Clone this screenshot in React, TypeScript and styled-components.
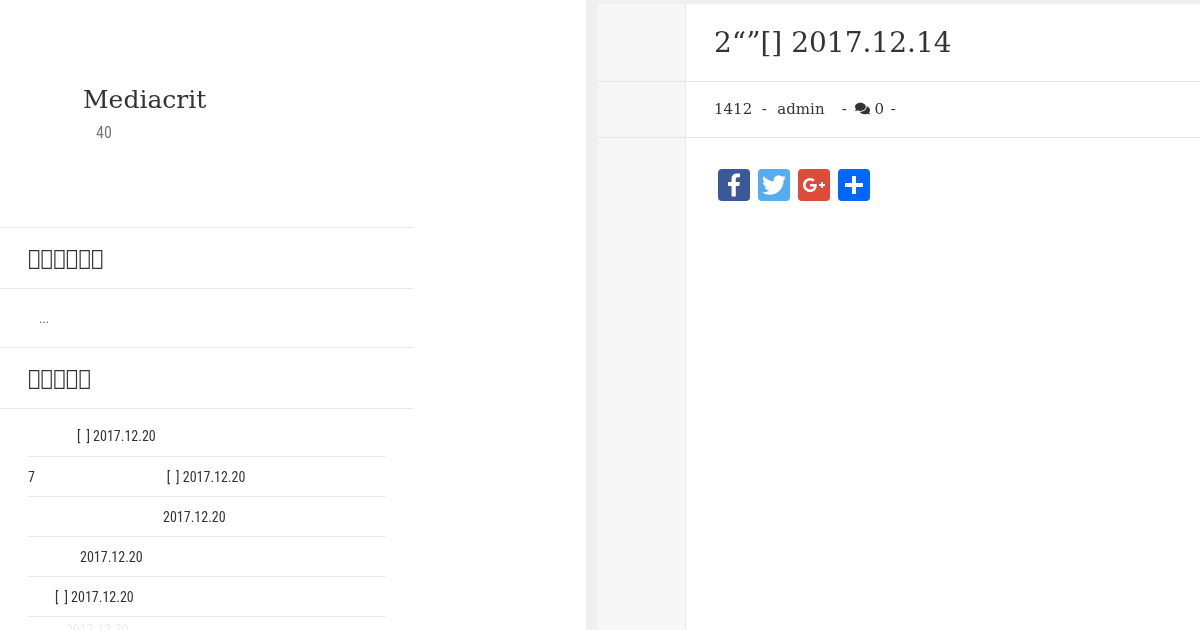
import React from "react";
import styled, { createGlobalStyle } from "styled-components";
import { FaComments } from "react-icons/fa";

const Global = createGlobalStyle`
  html, body { margin: 0; padding: 0; background: #fff; height: 630px; overflow: hidden; }
  #root { height: 630px; will-change: transform; }
`;
const serif = `"DejaVu Serif", serif`;
const narrow = `"Roboto Condensed", Roboto, "Liberation Sans", sans-serif`;

const Page = styled.div`
  display: flex;
  height: 630px;
  overflow: hidden;
`;
const Sidebar = styled.aside`
  width: 413px;
  flex: none;
`;
const Gutter = styled.div`
  width: 173px;
  flex: none;
`;
const Strip = styled.div`
  width: 12px;
  flex: none;
  background: #f0f0f0;
`;
const Main = styled.main`
  flex: 1;
  display: flex;
  flex-direction: column;
  padding-top: 4px;
  background: #f0f0f0;
  min-width: 0;
`;
const Brand = styled.div`
  height: 227px;
  padding: 85px 0 0 83px;
  box-sizing: border-box;
`;
const SiteName = styled.div`
  font: 25px/30px ${serif};
  color: #333;
`;
const Tagline = styled.div`
  font: 16px/20px ${narrow};
  font-stretch: 75%;
  color: #777;
  margin: 8px 0 0 13px;
`;
const WidgetTitle = styled.h3`
  margin: 0;
  height: 62px;
  box-sizing: border-box;
  padding-left: 28px;
  border-top: 1px solid #e8e8e8;
  border-bottom: 1px solid #e8e8e8;
  font: 400 21px/60px ${serif};
  color: #333;
`;
const Excerpt = styled.div`
  height: 58px;
  padding: 0 0 0 39px;
  font: 13px/60px ${narrow};
  font-stretch: 75%;
  color: #666;
`;
const PostList = styled.ul`
  list-style: none;
  margin: 8px 0 0;
  padding: 0 28px;
`;
const PostItem = styled.li<{ $indent: number; $faded?: boolean }>`
  height: 39px;
  padding-left: ${(p) => p.$indent}px;
  border-bottom: 1px solid #e8e8e8;
  font: 14px/${(p) => (p.$faded ? 26 : 41)}px ${narrow};
  font-stretch: 75%;
  color: ${(p) => (p.$faded ? "#eee" : "#333")};
  white-space: pre;
  &:first-child { line-height: 39px; }
`;
const Row = styled.div<{ $h: number }>`
  display: flex;
  flex: none;
  height: ${(p) => p.$h}px;
  border-bottom: 1px solid #e8e8e8;
  box-sizing: border-box;
  background: #fff;
`;
const Side = styled.div`
  width: 87px;
  flex: none;
  background: #f7f7f7;
  border-right: 1px solid #e8e8e8;
`;
const Cell = styled.div`
  flex: 1;
  padding-left: 28px;
  display: flex;
  align-items: center;
  min-width: 0;
`;
const Title = styled.h1`
  margin: 0;
  font: 400 28px/1 ${serif};
  color: #333;
  white-space: nowrap;
`;
const Meta = styled.div`
  display: flex;
  align-items: center;
  font: 15px/20px ${serif};
  color: #333;
  white-space: pre;
  margin-bottom: 2px;
  svg { width: 15px; height: 15px; color: #333; margin-left: 3px; }
`;
const MetaPart = styled.span<{ $left?: number; $right?: number }>`
  margin-left: ${(p) => p.$left ?? 0}px;
  margin-right: ${(p) => p.$right ?? 0}px;
`;
const Body = styled.div`
  flex: 1;
  display: flex;
  background: #fff;
`;
const Shares = styled.div`
  flex: 1;
  display: flex;
  gap: 8px;
  padding: 31px 0 0 32px;
  align-items: flex-start;
`;
const ShareIcon = styled.svg<{ $bg: string }>`
  width: 32px;
  height: 32px;
  border-radius: 4px;
  background: ${(p) => p.$bg};
  display: block;
  fill: #fff;
`;

const posts: [string, number, boolean?][] = [
  ["[\u2009 ] 2017.12.20", 49],
  ["7" + " ".repeat(41) + "[\u2009 ] 2017.12.20", 0],
  ["2017.12.20", 135],
  ["2017.12.20", 52],
  ["[\u2009 ] 2017.12.20", 27],
  ["2017.12.20", 38, true],
];

export default function App() {
  return (
    <Page>
      <Global />
      <Sidebar>
        <Brand>
          <SiteName>Mediacrit</SiteName>
          <Tagline>40</Tagline>
        </Brand>
        <WidgetTitle>{"\uE100\uE101\uE102\uE103\uE104\uE105"}</WidgetTitle>
        <Excerpt>...</Excerpt>
        <WidgetTitle>{"\uE100\uE101\uE102\uE103\uE104"}</WidgetTitle>
        <PostList>
          {posts.map(([t, i, f], n) => (
            <PostItem key={n} $indent={i} $faded={f}>{t}</PostItem>
          ))}
        </PostList>
      </Sidebar>
      <Gutter />
      <Strip />
      <Main>
        <Row $h={78}>
          <Side />
          <Cell><Title>2“”[] 2017.12.14</Title></Cell>
        </Row>
        <Row $h={56}>
          <Side />
          <Cell>
            <Meta>1412  -  <MetaPart $left={1} $right={3}>admin</MetaPart>   - <FaComments /> 0 <MetaPart $left={2}>-</MetaPart></Meta>
          </Cell>
        </Row>
        <Body>
          <Side />
          <Shares>
            <ShareIcon $bg="#3B5998" viewBox="0 0 32 32"><path d="M17.78 27.5V17.008h3.522l.527-4.09h-4.05v-2.61c0-1.182.33-1.99 2.023-1.99h2.166V4.66c-.375-.05-1.66-.16-3.155-.16-3.123 0-5.26 1.905-5.26 5.405v3.016h-3.53v4.09h3.53V27.5h4.223z" /></ShareIcon>
            <ShareIcon $bg="#55ACEE" viewBox="0 0 32 32"><path d="M28 8.557a9.913 9.913 0 0 1-2.828.775 4.93 4.93 0 0 0 2.166-2.725 9.738 9.738 0 0 1-3.13 1.194 4.92 4.92 0 0 0-3.593-1.55 4.924 4.924 0 0 0-4.794 6.049c-4.09-.21-7.72-2.17-10.15-5.15a4.942 4.942 0 0 0-.665 2.477c0 1.71.87 3.214 2.19 4.1a4.968 4.968 0 0 1-2.23-.616v.06c0 2.39 1.7 4.38 3.952 4.83-.414.115-.85.174-1.297.174-.318 0-.626-.03-.928-.086a4.935 4.935 0 0 0 4.6 3.42 9.893 9.893 0 0 1-6.114 2.107c-.398 0-.79-.023-1.175-.068a13.953 13.953 0 0 0 7.55 2.213c9.056 0 14.01-7.507 14.01-14.013 0-.213-.005-.426-.015-.637.96-.695 1.795-1.56 2.455-2.55z" /></ShareIcon>
            <ShareIcon $bg="#DD4B39" viewBox="0 0 32 32"><path d="M27 15h-2v-2h-2v2h-2v2h2v2h2v-2h2m-15-2v2.4h3.97c-.16 1.03-1.2 3.02-3.97 3.02-2.39 0-4.34-1.98-4.34-4.42s1.95-4.42 4.34-4.42c1.36 0 2.27.58 2.79 1.08l1.9-1.83C15.47 9.69 13.89 9 12 9c-3.87 0-7 3.13-7 7s3.13 7 7 7c4.04 0 6.72-2.84 6.72-6.84 0-.46-.05-.81-.11-1.16H12z" /></ShareIcon>
            <ShareIcon $bg="#0166FF" viewBox="0 0 32 32"><path d="M14 7h4v18h-4z" /><path d="M7 14h18v4H7z" /></ShareIcon>
          </Shares>
        </Body>
      </Main>
    </Page>
  );
}
